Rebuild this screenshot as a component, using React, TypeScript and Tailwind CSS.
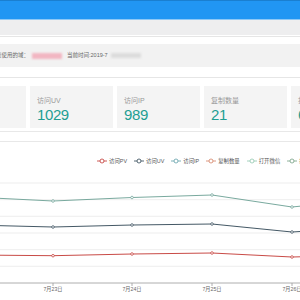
import React from "react";

const cards = [
  { label: "访问PV", value: "2046" },
  { label: "访问UV", value: "1029" },
  { label: "访问IP", value: "989" },
  { label: "复制数量", value: "21" },
  { label: "打开微信", value: "6" },
];

const legend = [
  { label: "访问PV", color: "#c23531" },
  { label: "访问UV", color: "#2f4554" },
  { label: "访问IP", color: "#61a0a8" },
  { label: "复制数量", color: "#d48265" },
  { label: "打开微信", color: "#91c7ae" },
  { label: "拦截数量", color: "#749f83" },
];

const xs = [53, 132, 212, 292];
const series = [
  { color: "#6a9f93", pts: [[-27, 28], [53, 32], [132, 28.5], [212, 26], [292, 38], [372, 30]] },
  { color: "#2f4554", pts: [[-27, 56], [53, 58], [132, 56], [212, 55], [292, 63], [372, 58]] },
  { color: "#c23531", pts: [[-27, 86], [53, 86.7], [132, 85], [212, 84], [292, 88], [372, 86]] },
];

export default function App() {
  return (
    <div className="w-[300px] h-[300px] overflow-hidden bg-white relative font-['Liberation_Sans','Noto_Sans_CJK_SC',sans-serif]">
      <div className="h-[20px] bg-[#2196f3] border-t border-[#1a7fd0] border-b border-b-[#8ec8f6]" />
      <div className="h-[15px] bg-[#eeeeef]" />
      <div className="mt-[1px] border-t border-b border-[#e6e6e6] pt-[7px] pb-[10px]">
        <div className="h-[23px] bg-[#f2f2f2] flex items-center text-[5.5px] text-[#666] whitespace-nowrap">
          <span className="ml-[-4px]">您使用的域：</span>
          <span className="ml-[3px] w-[30px] h-[6px] bg-[#f2b6c2] blur-[1px]" />
          <span className="ml-[5px]">当前时间:2019-7</span>
          <span className="ml-[3px] w-[30px] h-[5px] bg-[#dcdcdc] blur-[1px]" />
        </div>
      </div>
      <div className="mt-[8px] flex gap-[4px] ml-[-57px]">
        {cards.map((c) => (
          <div key={c.label} className="w-[83px] h-[42px] shrink-0 bg-[#f4f4f4] px-[7px] pt-[11px]">
            <div className="text-[7px] leading-[8px] text-[#999]">{c.label}</div>
            <div className="mt-[2px] text-[15px] leading-[16px] text-[#1e9e93] tracking-[-0.4px]">{c.value}</div>
          </div>
        ))}
      </div>
      <div className="mt-[3px] border-t border-[#e8e8e8]" />
      <div className="mt-[9px] border-t border-[#e8e8e8]">
        <div className="mt-[15px] h-[8px] flex items-center pl-[97px] gap-[7px] whitespace-nowrap">
          {legend.map((l) => (
            <div key={l.label} className="flex items-center gap-[2px] shrink-0">
              <svg width="10" height="6" viewBox="0 0 10 6">
                <line x1="0" y1="3" x2="10" y2="3" stroke={l.color} strokeWidth="0.8" />
                <circle cx="5" cy="3" r="2" fill="white" stroke={l.color} strokeWidth="0.8" />
              </svg>
              <span className="text-[5.4px] leading-[8px] text-[#555]">{l.label}</span>
            </div>
          ))}
        </div>
        <svg width="300" height="130" viewBox="0 0 300 130" className="block mt-[4px]">
          {[14, 30.7, 47.3, 64, 80.7, 97.3].map((y) => (
            <line key={y} x1="0" x2="300" y1={y} y2={y} stroke="#e8e8e8" strokeWidth="0.8" />
          ))}
          <line x1="0" x2="300" y1="114" y2="114" stroke="#999" strokeWidth="0.8" />
          {xs.map((x) => (
            <line key={x} x1={x} x2={x} y1="114" y2="117" stroke="#999" strokeWidth="0.8" />
          ))}
          {series.map((s) => (
            <g key={s.color}>
              <polyline
                points={s.pts.map((p) => p.join(",")).join(" ")}
                fill="none"
                stroke={s.color}
                strokeWidth="0.9"
              />
              {s.pts.map((p) => (
                <circle key={p[0]} cx={p[0]} cy={p[1]} r="1.3" fill="white" stroke={s.color} strokeWidth="0.7" />
              ))}
            </g>
          ))}
          {["7月23日", "7月24日", "7月25日", "7月26日"].map((t, i) => (
            <text
              key={t}
              x={xs[i]}
              y="121.5"
              textAnchor="middle"
              fontSize="5.2"
              fill="#666"
              fontFamily="'Liberation Sans','Noto Sans CJK SC',sans-serif"
            >
              {t}
            </text>
          ))}
        </svg>
      </div>
    </div>
  );
}
